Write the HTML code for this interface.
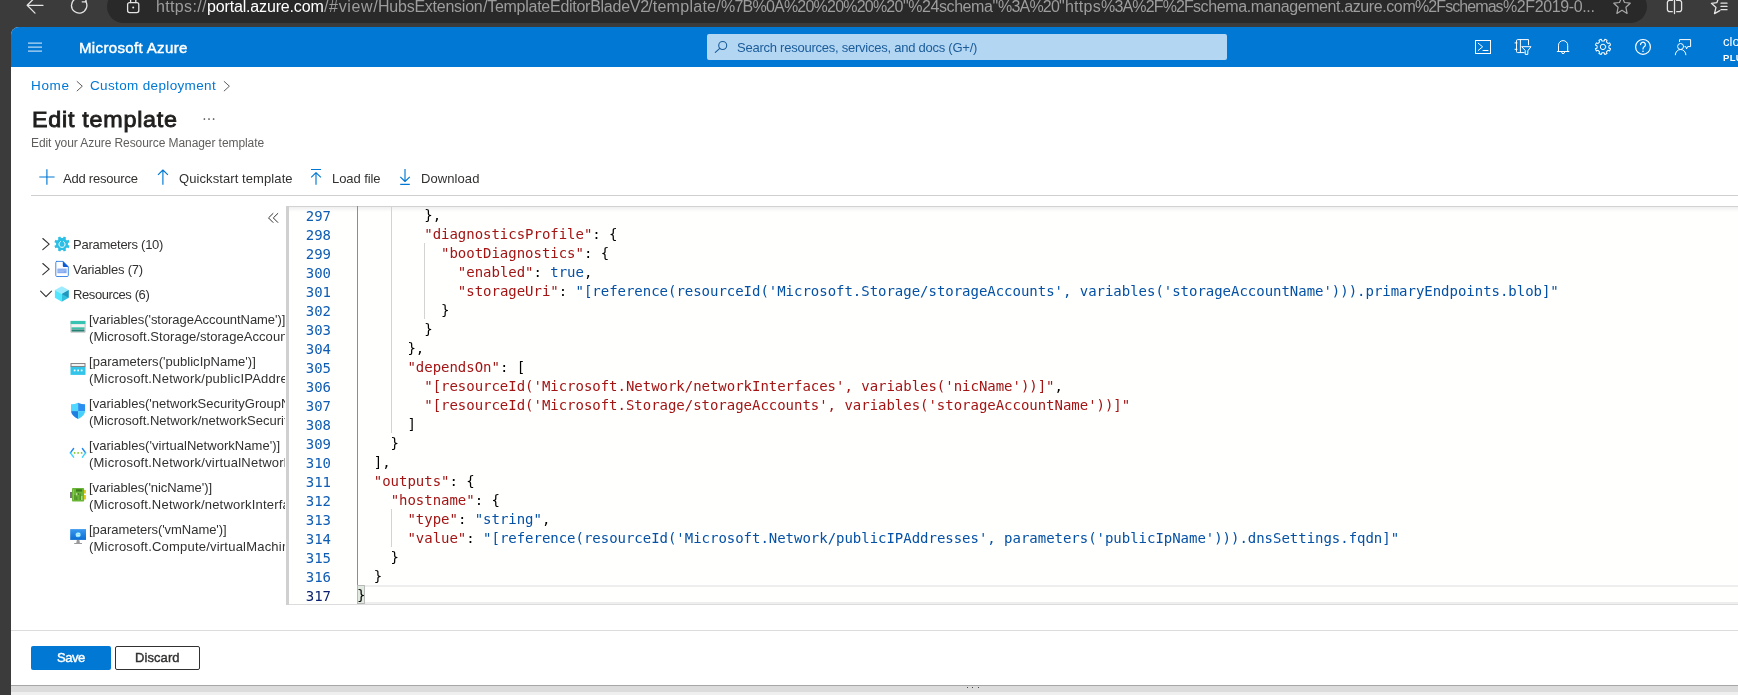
<!DOCTYPE html>
<html lang="en">
<head>
<meta charset="utf-8">
<title>Edit template - Microsoft Azure</title>
<style>
html,body{margin:0;padding:0}
body{width:1738px;height:695px;overflow:hidden;background:#3b3b3b;position:relative;font-family:"Liberation Sans",sans-serif;color:#323130}
.a{position:absolute}
.t{position:absolute;white-space:nowrap;line-height:20px;font-size:13px;will-change:transform}
svg{position:absolute;overflow:visible}
#urlpill{left:107px;top:-10px;width:1540px;height:33px;border-radius:17px;background:#292929}
#url b{font-weight:normal;color:#fff}
#page{left:11px;top:27px;width:1727px;height:668px;background:#fff;border-top-left-radius:8px}
#hdr{left:11px;top:27px;width:1727px;height:40px;background:#0078d4;border-top-left-radius:8px}
#search{left:707px;top:34px;width:520px;height:26px;background:#b3d6f2;border-radius:2px}
.mono{font-family:"DejaVu Sans Mono","Liberation Mono",monospace;font-size:14px;line-height:19px;white-space:pre;letter-spacing:-0.025px;will-change:transform}
#ed{left:286px;top:206px;width:1452px;height:399px;background:#fffffe}
#edbl{left:286px;top:206px;width:3px;height:399px;background:#d0d0d0}
#edshadow{left:289px;top:206px;width:1449px;height:6px;background:linear-gradient(#d2d2d2 0,#d2d2d2 1px,#efefef 1px,rgba(243,243,243,0) 6px)}
#ln{left:289px;top:207px;width:42px;text-align:right;color:#0e5cb4}
#ln i{font-style:normal;color:#0b216f}
#code{left:357px;top:206px;color:#000}
.k{color:#a31515}.s{color:#0451a5}
.g{position:absolute;width:1px;background:#d3d3d3}
#tree{left:31px;top:225px;width:253.5px;height:340px;overflow:hidden}
#u0{left:156.30px;top:-3.00px;font-size:16px;font-weight:normal;color:#9d9d9d;letter-spacing:0.346px;}
#u1{left:207.10px;top:-3.00px;font-size:16px;font-weight:normal;color:#ffffff;letter-spacing:-0.161px;}
#u2{left:323.70px;top:-3.00px;font-size:16px;font-weight:normal;color:#9d9d9d;letter-spacing:0.658px;}
#u3{left:378.10px;top:-3.00px;font-size:16px;font-weight:normal;color:#9d9d9d;letter-spacing:-0.240px;}
#u4{left:482.60px;top:-3.00px;font-size:16px;font-weight:normal;color:#9d9d9d;letter-spacing:-0.266px;}
#u5{left:648.40px;top:-3.00px;font-size:16px;font-weight:normal;color:#9d9d9d;letter-spacing:0.273px;}
#u6{left:721.40px;top:-3.00px;font-size:16px;font-weight:normal;color:#9d9d9d;letter-spacing:-0.783px;}
#u7{left:903.00px;top:-3.00px;font-size:16px;font-weight:normal;color:#9d9d9d;letter-spacing:-0.428px;}
#u8{left:997.70px;top:-3.00px;font-size:16px;font-weight:normal;color:#9d9d9d;letter-spacing:-0.805px;}
#u9{left:1058.70px;top:-3.00px;font-size:16px;font-weight:normal;color:#9d9d9d;letter-spacing:0.271px;}
#u10{left:1100.70px;top:-3.00px;font-size:16px;font-weight:normal;color:#9d9d9d;letter-spacing:-0.844px;}
#u11{left:1192.70px;top:-3.00px;font-size:16px;font-weight:normal;color:#9d9d9d;letter-spacing:-0.396px;}
#u12{left:1415.00px;top:-3.00px;font-size:16px;font-weight:normal;color:#9d9d9d;letter-spacing:-0.922px;}
#u13{left:1502.70px;top:-3.00px;font-size:16px;font-weight:normal;color:#9d9d9d;letter-spacing:-0.380px;}
#brand{left:79.00px;top:38.00px;font-size:15px;font-weight:normal;color:#fff;letter-spacing:0.357px;-webkit-text-stroke:0.45px #fff;}
#stext{left:737.00px;top:38.00px;font-size:13px;font-weight:normal;color:#1b5c9a;letter-spacing:-0.244px;}
#acct1{left:1723.00px;top:32.00px;font-size:13px;font-weight:normal;color:#fff;letter-spacing:0.000px;}
#acct2{left:1723.20px;top:48.00px;font-size:9.5px;font-weight:bold;color:#fff;letter-spacing:0.300px;}
#bc1{left:31.00px;top:76.00px;font-size:13.5px;font-weight:normal;color:#0078d4;letter-spacing:0.667px;}
#bc2{left:90.00px;top:76.00px;font-size:13.5px;font-weight:normal;color:#0078d4;letter-spacing:0.350px;}
#title{left:31.69px;top:110.00px;font-size:22px;font-weight:normal;color:#201f1e;letter-spacing:0.700px;-webkit-text-stroke:0.85px #201f1e;transform:scaleX(1.06);transform-origin:0 0;}
#sub{left:31.00px;top:133.00px;font-size:12px;font-weight:normal;color:#605e5c;letter-spacing:-0.075px;}
#tb1{left:63.00px;top:169.00px;font-size:13px;font-weight:normal;color:#323130;letter-spacing:-0.218px;}
#tb2{left:179.00px;top:169.00px;font-size:13px;font-weight:normal;color:#323130;letter-spacing:0.089px;}
#tb3{left:332.00px;top:169.00px;font-size:13px;font-weight:normal;color:#323130;letter-spacing:-0.075px;}
#tb4{left:421.00px;top:169.00px;font-size:13px;font-weight:normal;color:#323130;letter-spacing:0.086px;}
#tr1{left:72.60px;top:235.00px;font-size:13px;font-weight:normal;color:#323130;letter-spacing:-0.250px;}
#tr2{left:72.60px;top:260.00px;font-size:13px;font-weight:normal;color:#323130;letter-spacing:-0.217px;}
#tr3{left:72.60px;top:285.00px;font-size:13px;font-weight:normal;color:#323130;letter-spacing:-0.408px;}
#it0a{left:57.80px;top:85.00px;font-size:13px;font-weight:normal;color:#323130;letter-spacing:-0.047px;}
#it0b{left:57.80px;top:102.00px;font-size:13px;font-weight:normal;color:#323130;letter-spacing:0.060px;}
#it1a{left:57.80px;top:127.00px;font-size:13px;font-weight:normal;color:#323130;letter-spacing:0.026px;}
#it1b{left:57.80px;top:144.00px;font-size:13px;font-weight:normal;color:#323130;letter-spacing:0.220px;}
#it2a{left:57.80px;top:169.00px;font-size:13px;font-weight:normal;color:#323130;letter-spacing:0.030px;}
#it2b{left:57.80px;top:186.00px;font-size:13px;font-weight:normal;color:#323130;letter-spacing:0.020px;}
#it3a{left:57.80px;top:211.00px;font-size:13px;font-weight:normal;color:#323130;letter-spacing:0.041px;}
#it3b{left:57.80px;top:228.00px;font-size:13px;font-weight:normal;color:#323130;letter-spacing:0.220px;}
#it4a{left:57.80px;top:253.00px;font-size:13px;font-weight:normal;color:#323130;letter-spacing:-0.052px;}
#it4b{left:57.80px;top:270.00px;font-size:13px;font-weight:normal;color:#323130;letter-spacing:0.200px;}
#it5a{left:57.80px;top:295.00px;font-size:13px;font-weight:normal;color:#323130;letter-spacing:-0.043px;}
#it5b{left:57.80px;top:312.00px;font-size:13px;font-weight:normal;color:#323130;letter-spacing:0.210px;}
#savet{left:57.19px;top:648.00px;font-size:13px;font-weight:normal;color:#fff;letter-spacing:-0.500px;-webkit-text-stroke:0.4px #fff;}
#disct{left:135.00px;top:648.00px;font-size:13px;font-weight:normal;color:#323130;letter-spacing:0.083px;-webkit-text-stroke:0.4px #323130;}
</style>
</head>
<body>
<!-- browser chrome -->
<div class="a" id="urlpill"></div>
<svg id="chromeicons" width="1738" height="27" viewBox="0 0 1738 27" style="left:0;top:0;overflow:hidden" fill="none" stroke-linecap="round" stroke-linejoin="round">
  <g stroke="#e4e4e4" stroke-width="1.3">
    <path d="M43 5.3H27.4M35 -2.5L27.2 5.3L35 13.1"/>
    <path d="M85.6 1.2A7.7 7.7 0 1 1 81.5 -1.9"/>
    <path d="M82.2 1.8H86V-2"/>
    <rect x="127.6" y="2.6" width="11.2" height="10" rx="2"/>
    <path d="M130.6 2.6V-1a2.6 2.6 0 0 1 5.2 0V2.6"/>
    <path d="M1674.5 -3V13.6M1672.3 0.4H1669.6a2.2 2.2 0 0 0 -2.2 2.2V9.5a2.2 2.2 0 0 0 2.2 2.2H1672.3M1676.7 0.4H1679.4a2.2 2.2 0 0 1 2.2 2.2V9.5a2.2 2.2 0 0 1 -2.2 2.2H1676.7"/>
    <path d="M1721 3.2H1727M1721 6.4H1727M1721 9.7H1727"/>
    <path d="M1719.2 -3.5L1716.9 2.6L1711.4 3.3L1716 7.4L1714.5 13.6L1719.8 10.6"/>
  </g>
  <circle cx="133.2" cy="7.5" r="1" fill="#e4e4e4"/>
  <path d="M1622 -3.2L1624.5 2.5L1630.2 3.2L1625.9 7.3L1627.1 13.4L1622 10.3L1616.9 13.4L1618.1 7.3L1613.8 3.2L1619.5 2.5Z" stroke="#a8a8a8" stroke-width="1.2"/>
</svg>

<!-- page -->
<div class="a" id="page"></div>
<div class="a" id="hdr"></div>
<div class="a" id="search"></div>
<svg id="hdricons" width="1738" height="40" viewBox="0 27 1738 40" style="left:0;top:27px" fill="none" stroke="#fff" stroke-width="1" stroke-linecap="round" stroke-linejoin="round">
  <!-- hamburger -->
  <path d="M28 43.1H42M28 47.1H42M28 51.1H42" stroke-linecap="butt" stroke="#e8f2fb"/>
  <!-- search glyph -->
  <g stroke="#1b5c9a" stroke-width="1.1"><circle cx="722.7" cy="45.5" r="4"/><path d="M719.8 48.4L715.3 52.4"/></g>
  <!-- cloud shell -->
  <rect x="1475.5" y="40.5" width="15" height="13" stroke-linejoin="miter"/>
  <path d="M1478.2 43.2L1482.6 46.8L1478.2 50.5M1483 50.5H1488"/>
  <!-- directory + filter -->
  <path d="M1528.5 44.8V39.6H1517.6Q1516.5 39.6 1516.5 40.8V51.4Q1516.5 52.6 1517.6 52.6H1524.2M1520.4 39.6V52.6M1515 42.9H1517M1515 49.3H1517"/>
  <path d="M1522 46.7H1531L1527.8 50.8V54.4H1525.2V50.8Z"/>
  <!-- bell -->
  <path d="M1557.3 51.5H1568.9M1558.5 51.5V45.2a4.6 4.6 0 0 1 9.2 0V51.5M1561.6 52a1.5 1.7 0 0 0 3 0"/>
  <!-- gear -->
  <circle cx="1603" cy="46.9" r="2.7"/>
  <path id="gearpath" transform="rotate(22.5 1603 46.9)" d="M1608.86 45.61L1610.71 45.73L1610.71 48.07L1608.86 48.19L1608.05 50.13L1609.28 51.52L1607.62 53.18L1606.23 51.95L1604.29 52.76L1604.17 54.61L1601.83 54.61L1601.71 52.76L1599.77 51.95L1598.38 53.18L1596.72 51.52L1597.95 50.13L1597.14 48.19L1595.29 48.07L1595.29 45.73L1597.14 45.61L1597.95 43.67L1596.72 42.28L1598.38 40.62L1599.77 41.85L1601.71 41.04L1601.83 39.19L1604.17 39.19L1604.29 41.04L1606.23 41.85L1607.62 40.62L1609.28 42.28L1608.05 43.67Z"/>
  <!-- help -->
  <circle cx="1643" cy="46.9" r="7.4" stroke-width="1.2"/>
  <path d="M1640.6 44.6a2.4 2.4 0 1 1 3.6 2.1q-1.2 .8 -1.2 2.3" stroke-width="1.2"/>
  <circle cx="1643" cy="51.3" r=".8" fill="#fff" stroke="none"/>
  <!-- feedback -->
  <circle cx="1680.6" cy="46.5" r="3"/>
  <path d="M1675.3 54.8a5.3 5.3 0 0 1 10.6 0"/>
  <path d="M1679.5 41.6V39.6H1690.6V46.6H1687.6L1686.6 48.9L1685.8 46.6H1685"/>
</svg>

<!-- breadcrumb chevrons, title dots, toolbar icons, collapse -->
<svg id="pgicons" width="500" height="170" viewBox="0 67 500 170" style="left:0;top:67px" fill="none" stroke-linecap="round" stroke-linejoin="round">
  <g stroke="#605e5c" stroke-width="1"><path d="M77.1 81.5L82.3 86.2L77.1 90.9"/><path d="M224.2 81.5L229.4 86.2L224.2 90.9"/></g>
  <g fill="#3b3a39"><circle cx="204.4" cy="119" r=".85"/><circle cx="209" cy="119" r=".85"/><circle cx="213.6" cy="119" r=".85"/></g>
  <g stroke="#0078d4" stroke-width="1.15" stroke-linecap="butt">
    <path d="M39.3 177H54.6M46.9 169.3V184.7"/>
    <path d="M162.9 170V184.7M158 174.9L162.9 170L167.9 174.9"/>
    <path d="M311 169.5H321M316 172.6V184.7M311.2 177.4L316 172.6L320.9 177.4"/>
    <path d="M405 169V181.4M400.3 176.8L405 181.5L409.8 176.8M400.2 184.4H409.8"/>
  </g>
  <g stroke="#323130" stroke-width="1"><path d="M273 213.5L268.5 217.9L273 222.4M277.8 213.5L273.3 217.9L277.8 222.4"/></g>
</svg>

<div class="a" id="save" style="left:31px;top:646px;width:80px;height:24px;background:#0078d4;border-radius:2px"></div>
<div class="a" id="disc" style="left:115px;top:646px;width:83px;height:22px;border:1px solid #323130;border-radius:2px;background:#fff"></div>
<div class="t" id="u0">https://</div>
<div class="t" id="u1">portal.azure.com</div>
<div class="t" id="u2">/#view/</div>
<div class="t" id="u3">HubsExtension</div>
<div class="t" id="u4">/TemplateEditorBladeV2</div>
<div class="t" id="u5">/template/</div>
<div class="t" id="u6">%7B%0A%20%20%20%20</div>
<div class="t" id="u7">&quot;%24schema&quot;</div>
<div class="t" id="u8">%3A%20</div>
<div class="t" id="u9">&quot;https</div>
<div class="t" id="u10">%3A%2F%2F</div>
<div class="t" id="u11">schema.management.azure.com</div>
<div class="t" id="u12">%2Fschemas</div>
<div class="t" id="u13">%2F2019-0...</div>
<div class="t" id="brand">Microsoft Azure</div>
<div class="t" id="stext">Search resources, services, and docs (G+/)</div>
<div class="t" id="acct1">cloudadmin@contoso.com</div>
<div class="t" id="acct2">PLURALSIGHT</div>
<div class="t" id="bc1">Home</div>
<div class="t" id="bc2">Custom deployment</div>
<div class="t" id="title">Edit template</div>
<div class="t" id="sub">Edit your Azure Resource Manager template</div>
<div class="t" id="tb1">Add resource</div>
<div class="t" id="tb2">Quickstart template</div>
<div class="t" id="tb3">Load file</div>
<div class="t" id="tb4">Download</div>
<div class="t" id="tr1">Parameters (10)</div>
<div class="t" id="tr2">Variables (7)</div>
<div class="t" id="tr3">Resources (6)</div>
<div class="t" id="savet">Save</div>
<div class="t" id="disct">Discard</div>
<div class="a" style="left:31px;top:195px;width:1707px;height:1px;background:#cfcfcf"></div>

<!-- tree -->
<svg id="treeicons" width="100" height="340" viewBox="0 225 100 340" style="left:0;top:225px" stroke-linecap="round" stroke-linejoin="round">
  <g fill="none" stroke="#323130" stroke-width="1.1">
    <path d="M42.8 238.5L49.2 244.1L42.8 249.7"/>
    <path d="M42.8 263.5L49.2 269.1L42.8 274.7"/>
    <path d="M40.6 291.2L46 296.7L51.5 291.2"/>
  </g>
  <!-- parameters gear -->
  <path id="pgear" transform="rotate(22.5 62 244)" d="M67.83 242.60L69.69 242.72L69.69 245.28L67.83 245.40L67.12 247.13L68.35 248.54L66.54 250.35L65.13 249.12L63.40 249.83L63.28 251.69L60.72 251.69L60.60 249.83L58.87 249.12L57.46 250.35L55.65 248.54L56.88 247.13L56.17 245.40L54.31 245.28L54.31 242.72L56.17 242.60L56.88 240.87L55.65 239.46L57.46 237.65L58.87 238.88L60.60 238.17L60.72 236.31L63.28 236.31L63.40 238.17L65.13 238.88L66.54 237.65L68.35 239.46L67.12 240.87Z" fill="#2bbfe6"/>
  <path d="M60.4 241.6a3.1 3.1 0 1 0 3.2 0" fill="none" stroke="#fff" stroke-width="1"/>
  <!-- variables doc -->
  <path d="M56.7 261.4H63L68.3 266.6V275.4Q68.3 276.5 67.2 276.5H56.7Q55.8 276.5 55.8 275.4V262.5Q55.8 261.4 56.7 261.4Z" fill="#fff" stroke="#2b7de1" stroke-width=".9"/>
  <path d="M62.8 261.2L68.6 266.9H63.8Q62.8 266.9 62.8 265.9Z" fill="#0a5ad6"/>
  <rect x="57.4" y="268.6" width="9.2" height="4.6" fill="#83aaf0"/>
  <path d="M57.4 270.1H66.6M57.4 271.7H63.5" stroke="#b9cff7" stroke-width=".6"/>
  <!-- resources cube -->
  <path d="M61.8 286.3L68.7 290.1L61.8 294L54.9 290.1Z" fill="#9cebff"/>
  <path d="M54.9 290.1L61.8 294V301.7L54.9 297.8Z" fill="#50e6ff"/>
  <path d="M68.7 290.1L61.8 294V301.7L68.7 297.8Z" fill="#32bedd"/>
  <path d="M68.7 290.1L61.8 294L68.7 297.8Z" fill="#198ab3" opacity=".75"/>
  <!-- storage -->
  <rect x="70.5" y="321" width="15" height="11.6" fill="#f3f3f3" stroke="none"/>
  <rect x="70.5" y="320.9" width="15" height="3.2" fill="#37c2b1"/>
  <rect x="71.4" y="327.3" width="13.2" height="1.8" fill="#3fc0aa"/>
  <rect x="71.4" y="329.4" width="13.2" height="2.3" fill="#258277"/>
  <path d="M70.9 324.1V332.2H85.1V324.1" fill="none" stroke="#b9b9b9" stroke-width=".8" stroke-linecap="butt"/>
  <!-- public ip -->
  <rect x="70.5" y="366.4" width="15" height="8.5" fill="#32c5e9"/>
  <rect x="71" y="363.6" width="14" height="2.8" fill="#fff" stroke="#7a7a7a" stroke-width="1" stroke-linejoin="miter"/>
  <g fill="#fff"><rect x="73.8" y="369.6" width="1.7" height="1.7"/><rect x="77.3" y="369.6" width="1.7" height="1.7"/><rect x="80.8" y="369.6" width="1.7" height="1.7"/></g>
  <!-- nsg shield -->
  <clipPath id="shc"><path d="M78.1 402.7Q81.5 404.3 85.1 404.3V410.6Q85.1 416 78.1 419Q71 416 71 410.6V404.3Q74.6 404.3 78.1 402.7Z"/></clipPath>
  <g clip-path="url(#shc)">
    <rect x="70" y="402" width="8.1" height="9.1" fill="#50d8ff"/>
    <rect x="78.1" y="402" width="8" height="9.1" fill="#2b8ff0"/>
    <rect x="70" y="411.1" width="8.1" height="9" fill="#1f7fe0"/>
    <rect x="78.1" y="411.1" width="8" height="9" fill="#45d0fb"/>
  </g>
  <!-- vnet -->
  <g fill="none" stroke-width="1.4" stroke-linecap="round">
    <path d="M73.6 448.5L70.4 452.9" stroke="#2288ee"/><path d="M70.4 452.9L73.6 457.2" stroke="#3cd3fb"/>
    <path d="M82.4 448.5L85.6 452.9" stroke="#2288ee"/><path d="M85.6 452.9L82.4 457.2" stroke="#3cd3fb"/>
  </g>
  <g fill="#7cc427"><circle cx="74.6" cy="452.9" r=".9"/><circle cx="78.1" cy="452.9" r=".9"/><circle cx="81.6" cy="452.9" r=".9"/></g>
  <!-- nic -->
  <rect x="70" y="492" width="2.4" height="6" fill="#7a7a7a"/>
  <rect x="83.8" y="489.9" width="2.2" height="3.7" rx=".5" fill="#f2c811"/>
  <rect x="83.8" y="495.1" width="2.2" height="4.5" rx=".5" fill="#f2c811"/>
  <rect x="72" y="488" width="12.1" height="13.6" rx=".8" fill="#6bb536"/>
  <rect x="76" y="489.3" width="6.1" height="2.3" fill="#3d7a1c"/>
  <path d="M75 495V500M76.8 496.5V500M80.2 493.5V500M78.5 493V495" stroke="#3d7a1c" stroke-width=".8" stroke-linecap="butt"/>
  <path d="M73.5 489.5V500" stroke="#8fcf52" stroke-width=".8" stroke-linecap="butt"/>
  <path d="M76.6 493.2V495.2M81.8 496V500" stroke="#c9e8a8" stroke-width="1" stroke-linecap="butt"/>
  <!-- vm -->
  <linearGradient id="vmg" x1="0" y1="0" x2="0" y2="1"><stop offset="0" stop-color="#3a99f0"/><stop offset="1" stop-color="#0b6cd4"/></linearGradient>
  <rect x="70.2" y="529.1" width="15.8" height="10.8" fill="url(#vmg)"/>
  <circle cx="78.1" cy="534.7" r="2.5" fill="#7fe0ff"/>
  <path d="M76.3 534.2L79.8 533.4M76.4 535.9L79.9 535.2" stroke="#e9fbff" stroke-width=".7"/>
  <path d="M76.8 539.9H79.4L79.9 543H82V543.9H74.2V543H76.3Z" fill="#9a9a9a"/>
</svg>
<div class="a" id="tree">
<div class="t" id="it0a">[variables('storageAccountName')]</div>
<div class="t" id="it0b">(Microsoft.Storage/storageAccounts)</div>
<div class="t" id="it1a">[parameters('publicIpName')]</div>
<div class="t" id="it1b">(Microsoft.Network/publicIPAddresses)</div>
<div class="t" id="it2a">[variables('networkSecurityGroupName')]</div>
<div class="t" id="it2b">(Microsoft.Network/networkSecurityGroups)</div>
<div class="t" id="it3a">[variables('virtualNetworkName')]</div>
<div class="t" id="it3b">(Microsoft.Network/virtualNetworks)</div>
<div class="t" id="it4a">[variables('nicName')]</div>
<div class="t" id="it4b">(Microsoft.Network/networkInterfaces)</div>
<div class="t" id="it5a">[parameters('vmName')]</div>
<div class="t" id="it5b">(Microsoft.Compute/virtualMachines)</div>
</div>

<!-- editor -->
<div class="a" id="ed"></div>
<div class="a" style="left:357px;top:585px;width:1381px;height:15.4px;border-top:2px solid #eeeeee;border-bottom:2px solid #eeeeee"></div>

<div class="a" style="left:357px;top:585px;width:6.4px;height:17.4px;background:#e0eadf;border:1px solid #b9b9b9"></div>
<div class="a" style="left:286px;top:604px;width:1452px;height:1px;background:#dcdcdc"></div>
<div class="a" id="edshadow"></div>
<div class="a" id="edbl"></div>
<div class="g" style="left:357px;top:206px;height:379px;background:#8e8e8e"></div>
<div class="g" style="left:390.7px;top:206px;height:227px"></div>
<div class="g" style="left:424.4px;top:243px;height:76px"></div>
<div class="g" style="left:390.7px;top:509px;height:38px"></div>
<div class="a mono" id="ln">297
298
299
300
301
302
303
304
305
306
307
308
309
310
311
312
313
314
315
316
<i>317</i></div>
<div class="a mono" id="code">        },
        <span class="k">"diagnosticsProfile"</span>: {
          <span class="k">"bootDiagnostics"</span>: {
            <span class="k">"enabled"</span>: <span class="s">true</span>,
            <span class="k">"storageUri"</span>: <span class="s">"[reference(resourceId('Microsoft.Storage/storageAccounts', variables('storageAccountName'))).primaryEndpoints.blob]"</span>
          }
        }
      },
      <span class="k">"dependsOn"</span>: [
        <span class="k">"[resourceId('Microsoft.Network/networkInterfaces', variables('nicName'))]"</span>,
        <span class="k">"[resourceId('Microsoft.Storage/storageAccounts', variables('storageAccountName'))]"</span>
      ]
    }
  ],
  <span class="k">"outputs"</span>: {
    <span class="k">"hostname"</span>: {
      <span class="k">"type"</span>: <span class="s">"string"</span>,
      <span class="k">"value"</span>: <span class="s">"[reference(resourceId('Microsoft.Network/publicIPAddresses', parameters('publicIpName'))).dnsSettings.fqdn]"</span>
    }
  }
}</div>

<!-- footer -->
<div class="a" style="left:11px;top:630px;width:1727px;height:1px;background:#dcdcdc"></div>
<div class="a" style="left:11px;top:685px;width:1727px;height:1px;background:#a6a6a6"></div>
<div class="a" style="left:11px;top:686px;width:1727px;height:6px;background:#dcdcdc"></div>
<div class="a" style="left:11px;top:692px;width:1727px;height:3px;background:#efefef"></div>
<div class="a" style="left:966.5px;top:687px;width:1px;height:1px;background:#444"></div>
<div class="a" style="left:972px;top:687px;width:1px;height:1px;background:#444"></div>
<div class="a" style="left:977.5px;top:687px;width:1px;height:1px;background:#444"></div>
</body>
</html>
